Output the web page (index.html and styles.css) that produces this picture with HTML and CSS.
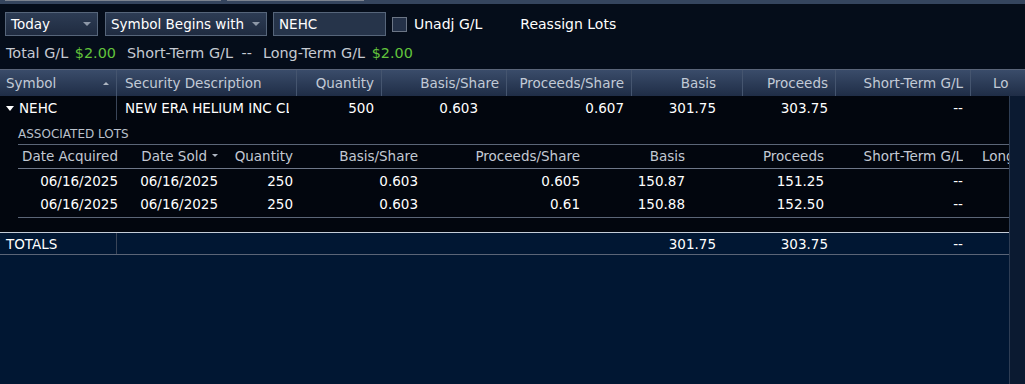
FILE: index.html
```html
<!DOCTYPE html>
<html lang="en">
<head>
  <meta charset="UTF-8" />
  <title>Realized Gain/Loss</title>
  <link rel="stylesheet" href="styles.css">
</head>
<body>
  <div class="tabs">
    <span class="tab tab-one"></span>
    <span class="tab tab-two"></span>
  </div>

  <div class="toolbar">
    <div class="select sel-day"><span>Today</span><span class="caret"></span></div>
    <div class="select sel-sym"><span>Symbol Begins with</span><span class="caret"></span></div>
    <div class="input">NEHC</div>
    <label class="check"><span class="box"></span>Unadj G/L</label>
    <span class="link">Reassign Lots</span>
  </div>

  <div class="summary">
    <span class="stat">Total G/L <span class="gain">$2.00</span></span>
    <span class="stat">Short-Term G/L <span class="plain">--</span></span>
    <span class="stat">Long-Term G/L <span class="gain">$2.00</span></span>
  </div>

  <div class="grid">
    <div class="table">
      <div class="row head">
        <div class="cell c1"><span>Symbol</span><span class="sort-up"></span></div>
        <div class="cell c2">Security Description</div>
        <div class="cell c3">Quantity</div>
        <div class="cell c4">Basis/Share</div>
        <div class="cell c5">Proceeds/Share</div>
        <div class="cell c6">Basis</div>
        <div class="cell c7">Proceeds</div>
        <div class="cell c8">Short-Term G/L</div>
        <div class="cell c9">Long-Term G/L</div>
      </div>

      <div class="row data">
        <div class="cell c1"><span class="expand"></span>NEHC</div>
        <div class="cell c2"><span class="clip">NEW ERA HELIUM INC CLASS A COMMON STOCK</span></div>
        <div class="cell c3">500</div>
        <div class="cell c4">0.603</div>
        <div class="cell c5">0.607</div>
        <div class="cell c6">301.75</div>
        <div class="cell c7">303.75</div>
        <div class="cell c8">--</div>
        <div class="cell c9"></div>
      </div>

      <div class="lots">
        <div class="lots-title">ASSOCIATED LOTS</div>
        <div class="lots-table">
          <div class="srow shead">
            <div class="scell s1">Date Acquired</div>
            <div class="scell s2">Date Sold<span class="sort-down"></span></div>
            <div class="scell s3">Quantity</div>
            <div class="scell s4">Basis/Share</div>
            <div class="scell s5">Proceeds/Share</div>
            <div class="scell s6">Basis</div>
            <div class="scell s7">Proceeds</div>
            <div class="scell s8">Short-Term G/L</div>
            <div class="scell s9">Long-Term G/L</div>
          </div>
          <div class="sbody">
            <div class="srow">
              <div class="scell s1">06/16/2025</div>
              <div class="scell s2">06/16/2025</div>
              <div class="scell s3">250</div>
              <div class="scell s4">0.603</div>
              <div class="scell s5">0.605</div>
              <div class="scell s6">150.87</div>
              <div class="scell s7">151.25</div>
              <div class="scell s8">--</div>
              <div class="scell s9"></div>
            </div>
            <div class="srow">
              <div class="scell s1">06/16/2025</div>
              <div class="scell s2">06/16/2025</div>
              <div class="scell s3">250</div>
              <div class="scell s4">0.603</div>
              <div class="scell s5">0.61</div>
              <div class="scell s6">150.88</div>
              <div class="scell s7">152.50</div>
              <div class="scell s8">--</div>
              <div class="scell s9"></div>
            </div>
          </div>
        </div>
      </div>

      <div class="row totals">
        <div class="cell c1">TOTALS</div>
        <div class="cell c2"></div>
        <div class="cell c3"></div>
        <div class="cell c4"></div>
        <div class="cell c5"></div>
        <div class="cell c6">301.75</div>
        <div class="cell c7">303.75</div>
        <div class="cell c8">--</div>
        <div class="cell c9"></div>
      </div>

      <div class="filler"></div>
    </div>

    <div class="vscroll">
      <div class="vs-head"></div>
      <div class="vs-body"></div>
    </div>
  </div>
</body>
</html>
```

FILE: styles.css
```css
body {
  margin: 0;
  height: 384px;
  overflow: hidden;
  display: flex;
  flex-direction: column;
  background: #050d1a;
  color: #ffffff;
  font-family: 'DejaVu Sans', sans-serif;
  font-size: 13.5px;
}

/* top tab strip */
.tabs {
  flex: none;
  height: 4px;
  display: flex;
  gap: 6px;
  padding-left: 5px;
  background: #35455e;
}

.tab {
  height: 1px;
  background: #7d8490;
}

.tab-one { width: 216px; }
.tab-two { width: 137px; }

/* filter toolbar */
.toolbar {
  flex: none;
  display: flex;
  align-items: center;
  height: 24px;
  margin-top: 8px;
  padding-left: 5px;
}

.select {
  box-sizing: border-box;
  height: 24px;
  display: flex;
  align-items: center;
  justify-content: space-between;
  padding: 0 6px 0 5px;
  border: 1px solid #56657a;
  background: linear-gradient(#2d3c54, #1f2b40);
}

.sel-day { width: 93px; }

.sel-sym {
  width: 162px;
  margin-left: 7px;
}

.caret {
  width: 0;
  height: 0;
  border-left: 4px solid transparent;
  border-right: 4px solid transparent;
  border-top: 4px solid #8e98a8;
}

.input {
  box-sizing: border-box;
  width: 113px;
  height: 24px;
  margin-left: 6px;
  padding-left: 5px;
  display: flex;
  align-items: center;
  border: 1px solid #56657a;
  background: #26344a;
}

.check {
  display: flex;
  align-items: center;
  margin-left: 6px;
  font-size: 14px;
}

.check .box {
  box-sizing: border-box;
  width: 15px;
  height: 15px;
  margin-right: 7px;
  border: 1px solid #6b7585;
  background: #243148;
}

.link {
  margin-left: 38px;
  font-size: 14px;
}

/* gain/loss summary */
.summary {
  flex: none;
  display: flex;
  gap: 11px;
  height: 18px;
  line-height: 18px;
  margin-top: 8px;
  padding: 0 0 7px 6px;
  color: #c6cad2;
  font-size: 14.4px;
}

.gain {
  margin-left: 2px;
  color: #62c43c;
}

.plain { margin-left: 4px; }

/* grid */
.grid {
  flex: 1;
  display: flex;
  min-height: 0;
}

.table {
  flex: 1;
  display: flex;
  flex-direction: column;
  background: #02060e;
  min-width: 0;
}

.row {
  flex: none;
  display: flex;
}

.cell {
  box-sizing: border-box;
  flex: none;
  display: flex;
  align-items: center;
  justify-content: flex-end;
  padding: 0 7px 0 0;
  white-space: nowrap;
  overflow: hidden;
  border-right: 1px solid transparent;
}

.c1 { width: 117px; justify-content: flex-start; padding-left: 6px; }
.c2 { width: 180px; justify-content: flex-start; padding-left: 8px; }
.c3 { width: 85px; }
.c4 { width: 125px; }
.c5 { width: 125px; }
.c6 { width: 111px; padding-right: 26px; }
.c7 { width: 93px; }
.c8 { width: 135px; }
.c9 { flex: 1; justify-content: flex-start; padding-left: 22px; }

.head {
  height: 26px;
  border-top: 1px solid #5a6478;
  background: linear-gradient(#3a4c6a, #1f2d46);
  color: #c2cad6;
}

.head .cell { border-right-color: #45556f; }

.head .c1 { justify-content: space-between; }
.head .c9 { border-right: none; }

.sort-up {
  width: 0;
  height: 0;
  border-left: 3px solid transparent;
  border-right: 3px solid transparent;
  border-bottom: 3px solid #aeb6c2;
}

.data { height: 24px; }

.data .c1,
.totals .c1 { border-right-color: #3a4558; }

.data .c4 { padding-right: 28px; }

.expand {
  width: 0;
  height: 0;
  margin-right: 5px;
  border-left: 4px solid transparent;
  border-right: 4px solid transparent;
  border-top: 5px solid #ffffff;
}

.clip {
  min-width: 0;
  overflow: hidden;
}

/* associated lots */
.lots {
  flex: none;
  padding: 0 0 14px 18px;
}

.lots-title {
  box-sizing: border-box;
  height: 24px;
  padding-top: 3px;
  display: flex;
  align-items: center;
  font-size: 12px;
  color: #b9c0cb;
}

.lots-table { border-top: 1px solid #5b6577; }

.srow {
  display: flex;
  height: 23px;
}

.shead {
  box-sizing: border-box;
  height: 24px;
  padding-bottom: 2px;
  border-bottom: 1px solid #6e7788;
  color: #c3c9d3;
}

.sbody {
  padding-bottom: 2px;
  border-bottom: 1px solid #5b6577;
}

.scell {
  box-sizing: border-box;
  flex: none;
  display: flex;
  align-items: center;
  justify-content: flex-end;
  white-space: nowrap;
  overflow: hidden;
}

.s1 { width: 100px; }
.s2 { width: 100px; }
.s3 { width: 75px; }
.s4 { width: 125px; }
.s5 { width: 162px; }
.s6 { width: 105px; }
.s7 { width: 139px; }
.s8 { width: 139px; }
.s9 { flex: 1; justify-content: flex-start; padding-left: 19px; }

.sort-down {
  width: 0;
  height: 0;
  margin-left: 5px;
  border-left: 3px solid transparent;
  border-right: 3px solid transparent;
  border-top: 3px solid #aeb6c2;
}

/* totals */
.totals {
  height: 21px;
  border-top: 1px solid #c4ccd8;
  border-bottom: 1px solid #5b6577;
  background: #011733;
}

.filler {
  flex: 1;
  background: #011733;
}

/* vertical scrollbar column */
.vscroll {
  flex: none;
  width: 16px;
  display: flex;
  flex-direction: column;
}

.vs-head {
  height: 26px;
  border-top: 1px solid #5a6478;
  background: linear-gradient(#3a4c6a, #1f2d46);
}

.vs-body {
  flex: 1;
  box-sizing: border-box;
  border-left: 1px solid #2e3d54;
  background: #0b1a31;
}
```
